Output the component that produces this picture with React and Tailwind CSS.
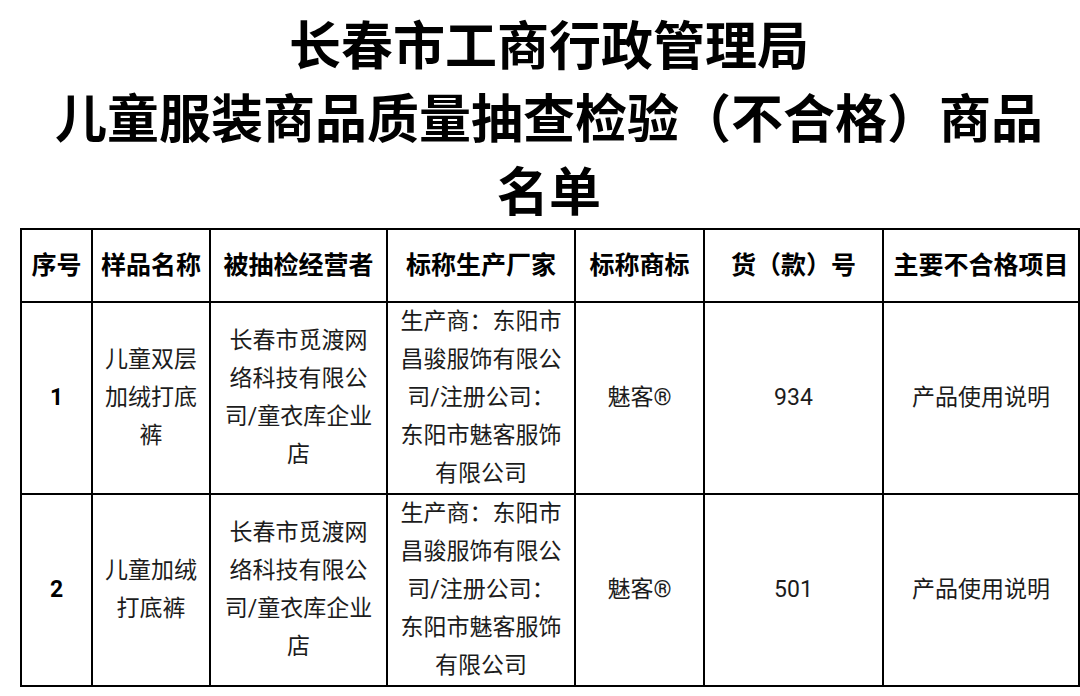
import React from "react";

const font = { fontFamily: 'Roboto, "Noto Sans CJK SC", sans-serif' };

const rows = [
  {
    no: "1",
    name: ["儿童双层", "加绒打底", "裤"],
    seller: ["长春市觅渡网", "络科技有限公", "司/童衣库企业", "店"],
    maker: ["生产商：东阳市", "昌骏服饰有限公", "司/注册公司：", "东阳市魅客服饰", "有限公司"],
    brand: "魅客®",
    sku: "934",
    item: "产品使用说明",
  },
  {
    no: "2",
    name: ["儿童加绒", "打底裤"],
    seller: ["长春市觅渡网", "络科技有限公", "司/童衣库企业", "店"],
    maker: ["生产商：东阳市", "昌骏服饰有限公", "司/注册公司：", "东阳市魅客服饰", "有限公司"],
    brand: "魅客®",
    sku: "501",
    item: "产品使用说明",
  },
];

const headers = ["序号", "样品名称", "被抽检经营者", "标称生产厂家", "标称商标", "货（款）号", "主要不合格项目"];

function Lines({ lines }) {
  return lines.map((l, i) => (
    <div key={i} className="whitespace-nowrap">
      {l}
    </div>
  ));
}

export default function App() {
  return (
    <div className="w-[1080px] h-[696px] bg-white overflow-hidden text-black" style={font}>
      <h1 className="pt-[11px] pl-[18px] text-center text-[52px] leading-[73px] font-bold whitespace-nowrap">
        长春市工商行政管理局
        <br />
        儿童服装商品质量抽查检验（不合格）商品
        <br />
        名单
      </h1>
      <div className="pl-[20px] -mt-[2px]">
        <table className="table-fixed border-collapse w-[1058px]">
          <colgroup>
            <col className="w-[71px]" />
            <col className="w-[118px]" />
            <col className="w-[177px]" />
            <col className="w-[188px]" />
            <col className="w-[129px]" />
            <col className="w-[179px]" />
            <col className="w-[196px]" />
          </colgroup>
          <thead>
            <tr className="h-[73px]">
              {headers.map((h) => (
                <th
                  key={h}
                  className="border-2 border-black text-center align-middle text-[25px] font-bold leading-[30px] whitespace-nowrap p-0"
                >
                  {h}
                </th>
              ))}
            </tr>
          </thead>
          <tbody className="text-[23px] leading-[38px] text-[#1c1c1c]">
            {rows.map((r) => (
              <tr key={r.no} className="h-[188px]">
                <td className="border-2 border-black text-center align-middle font-bold text-black p-0">{r.no}</td>
                <td className="border-2 border-black text-center align-middle p-0">
                  <Lines lines={r.name} />
                </td>
                <td className="border-2 border-black text-center align-middle p-0">
                  <Lines lines={r.seller} />
                </td>
                <td className="border-2 border-black text-center align-middle p-0">
                  <Lines lines={r.maker} />
                </td>
                <td className="border-2 border-black text-center align-middle p-0">{r.brand}</td>
                <td className="border-2 border-black text-center align-middle p-0">{r.sku}</td>
                <td className="border-2 border-black text-center align-middle p-0">{r.item}</td>
              </tr>
            ))}
          </tbody>
        </table>
      </div>
    </div>
  );
}
